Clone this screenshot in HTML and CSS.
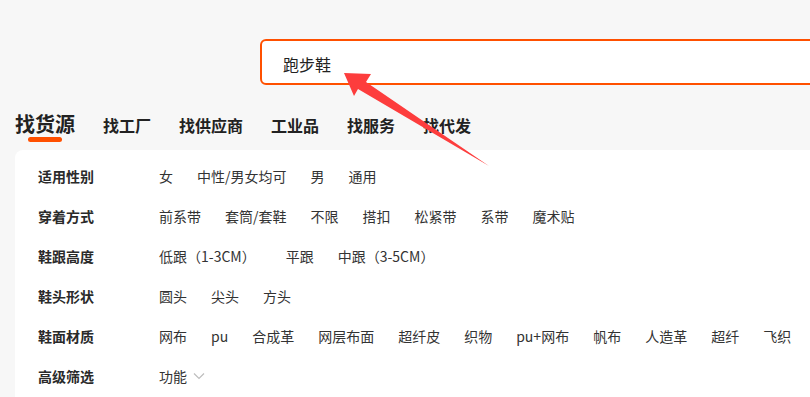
FILE: index.html
```html
<!DOCTYPE html>
<html lang="zh-CN">
<head>
<meta charset="utf-8">
<title>找货源</title>
<link rel="stylesheet" href="styles.css">
</head>
<body>
<div class="page">
  <div class="search">
    <div class="search-box"><span class="query">跑步鞋</span></div>
  </div>
  <nav class="tabs">
    <span class="tab tab-active">找货源</span>
    <span class="tab">找工厂</span>
    <span class="tab">找供应商</span>
    <span class="tab">工业品</span>
    <span class="tab">找服务</span>
    <span class="tab">找代发</span>
  </nav>
  <section class="filters">
    <div class="row">
      <div class="label">适用性别</div>
      <div class="values"><span>女</span><span>中性/男女均可</span><span>男</span><span>通用</span></div>
    </div>
    <div class="row">
      <div class="label">穿着方式</div>
      <div class="values"><span>前系带</span><span>套筒/套鞋</span><span>不限</span><span>搭扣</span><span>松紧带</span><span>系带</span><span>魔术贴</span></div>
    </div>
    <div class="row">
      <div class="label">鞋跟高度</div>
      <div class="values"><span>低跟（1-3CM）</span><span class="gap-wide">平跟</span><span>中跟（3-5CM）</span></div>
    </div>
    <div class="row">
      <div class="label">鞋头形状</div>
      <div class="values"><span>圆头</span><span>尖头</span><span>方头</span></div>
    </div>
    <div class="row">
      <div class="label">鞋面材质</div>
      <div class="values"><span>网布</span><span>pu</span><span>合成革</span><span>网层布面</span><span>超纤皮</span><span>织物</span><span>pu+网布</span><span>帆布</span><span>人造革</span><span>超纤</span><span>飞织</span></div>
    </div>
    <div class="row">
      <div class="label">高级筛选</div>
      <div class="values"><span class="dropdown">功能<svg class="chev" width="12" height="8" viewBox="0 0 12 8"><path d="M1 1.5 L6 6.5 L11 1.5" fill="none" stroke="#bdbdbd" stroke-width="1.2"/></svg></span></div>
    </div>
  </section>
  <svg class="arrow" width="810" height="397" viewBox="0 0 810 397">
    <polygon points="344,73 371,74 366,82 489,166 358,89 354,96" fill="#fd3d3d"/>
  </svg>
</div>
</body>
</html>
```
FILE: styles.css
```css
html, body {
  margin: 0;
  padding: 0;
}
body {
  background: #f7f7f7;
  font-family: "Noto Sans CJK SC", "Noto Sans", sans-serif;
  color: #333;
  width: 810px;
  height: 397px;
  overflow: hidden;
}
.page {
  position: relative;
  width: 810px;
  height: 397px;
  overflow: hidden;
}
.search {
  padding-top: 39px;
  padding-left: 260px;
}
.search-box {
  box-sizing: border-box;
  width: 620px;
  height: 46px;
  border: 2px solid #ff5000;
  border-radius: 6px;
  background: #fff;
  display: flex;
  align-items: center;
  padding-left: 21px;
}
.query {
  font-size: 16px;
  color: #222;
  line-height: 20px;
  margin-top: 4px;
}
.tabs {
  display: flex;
  align-items: baseline;
  gap: 28px;
  margin-top: 29px;
  height: 36px;
  padding-left: 15px;
}
.tab {
  font-size: 16px;
  font-weight: bold;
  color: #222;
  line-height: 20px;
  position: relative;
}
.tab-active {
  font-size: 20px;
  color: #222;
}
.tab-active::after {
  content: "";
  position: absolute;
  left: 13px;
  top: 23px;
  width: 34px;
  height: 5px;
  border-radius: 3px;
  background: #ff5000;
}
.filters {
  margin-left: 15px;
  background: #fff;
  border-radius: 8px 0 0 0;
  padding: 6px 0 20px 23px;
}
.row {
  display: flex;
  align-items: center;
  height: 40px;
  font-size: 14px;
  white-space: nowrap;
}
.label {
  width: 121px;
  flex: none;
  font-weight: bold;
  color: #2a2a2a;
}
.values {
  display: flex;
  gap: 24px;
  color: #333;
}
.gap-wide {
  margin-left: 6px;
}
.dropdown {
  display: flex;
  align-items: center;
  gap: 6px;
}
.chev {
  display: block;
}
.arrow {
  position: absolute;
  left: 0;
  top: 0;
  pointer-events: none;
}
```
